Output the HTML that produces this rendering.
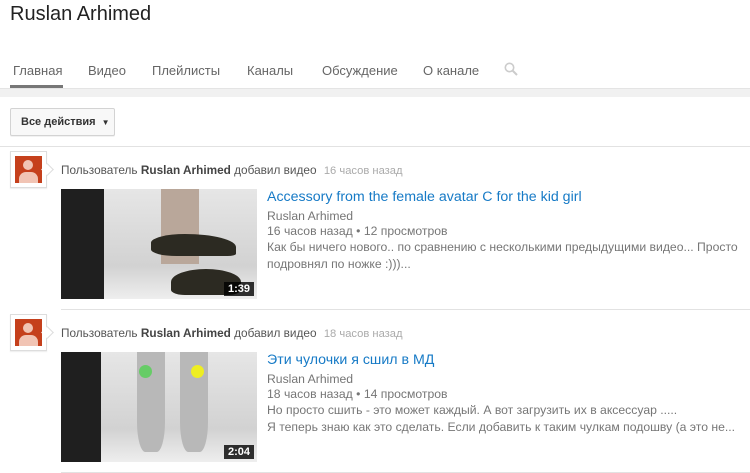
<!DOCTYPE html>
<html><head><meta charset="utf-8"><style>
*{margin:0;padding:0;box-sizing:border-box}
body{width:750px;height:473px;overflow:hidden;background:#fff;font-family:"Liberation Sans",Arial,sans-serif;position:relative;color:#222}
.a{position:absolute;white-space:nowrap}
.tab{font-size:13px;color:#666;top:63px}
.av{position:absolute;left:10px;width:37px;height:37px;border:1px solid #ddd;background:#fff;box-shadow:0 1px 1px rgba(0,0,0,.08)}
.av i{position:absolute;left:4px;top:4px;width:27px;height:27px;background:#c5401c;overflow:hidden}
.av i:before{content:"";position:absolute;left:8px;top:4px;width:10px;height:10px;border-radius:50%;background:#f1c4b4}
.av i:after{content:"";position:absolute;left:4px;top:16px;width:19px;height:14px;border-radius:7px 7px 0 0;background:#f1c4b4}
.av b{position:absolute;right:-6px;top:13px;width:9px;height:9px;background:#fff;border-right:1px solid #ddd;border-top:1px solid #ddd;transform:rotate(45deg)}
.feed{font-size:11.8px;color:#555;left:61px}
.feed b{color:#444;font-weight:600}
.feed span{color:#aaa;font-size:11.2px;margin-left:4px}
.th{position:absolute;left:61px;width:196px;height:110px;background:linear-gradient(#e6e6e6,#d2d2d2 70%,#eee)}
.th .p{position:absolute;left:0;top:0;width:43px;height:110px;background:#1f1f1f}
.th .d{position:absolute;right:3px;bottom:3px;background:rgba(0,0,0,.8);color:#fff;font-size:11px;font-weight:bold;padding:1px 4px}
.ttl{font-size:14.2px;color:#167ac6;left:267px}
.m{font-size:12.2px;color:#767676;left:267px}
.ds{font-size:12.2px;color:#767676;left:267px;line-height:17px}
.hr{position:absolute;height:1px;background:#e2e2e2}
</style></head><body>
<div class="a" style="left:10px;top:3px;font-size:20px;color:#222">Ruslan Arhimed</div>
<div class="a tab" style="left:13px">Главная</div>
<div class="a tab" style="left:88px">Видео</div>
<div class="a tab" style="left:152px">Плейлисты</div>
<div class="a tab" style="left:247px">Каналы</div>
<div class="a tab" style="left:322px">Обсуждение</div>
<div class="a tab" style="left:423px">О канале</div>
<svg class="a" style="left:504px;top:62px" width="14" height="14" viewBox="0 0 14 14"><circle cx="5.5" cy="5.5" r="4.2" fill="none" stroke="#ccc" stroke-width="1.6"/><path d="M8.5 8.5L13 13" stroke="#ccc" stroke-width="2"/></svg>
<div class="a" style="left:10px;top:85px;width:53px;height:3px;background:#777"></div>
<div class="a" style="left:0;top:88px;width:750px;height:9px;background:#f1f1f1;border-top:1px solid #e4e4e4"></div>
<div class="a" style="left:10px;top:108px;width:105px;height:28px;border:1px solid #d3d3d3;border-radius:2px;background:#f8f8f8;box-shadow:0 1px 0 rgba(0,0,0,.05);font-size:11px;font-weight:bold;color:#333;padding:7px 0 0 10px">Все действия <span style="font-size:8px;margin-left:3px">▼</span></div>
<div class="hr" style="left:0;top:146px;width:750px"></div>

<div class="av" style="top:151px"><i></i><b></b></div>
<div class="a feed" style="top:163px">Пользователь <b>Ruslan Arhimed</b> добавил видео <span>16 часов назад</span></div>
<div class="th" style="top:189px"><div class="p"></div>
<div style="position:absolute;left:100px;top:0;width:38px;height:75px;background:#b9a79a"></div>
<div style="position:absolute;left:90px;top:45px;width:85px;height:22px;border-radius:40% 60% 10% 30%;background:#2c2a22"></div>
<div style="position:absolute;left:110px;top:80px;width:70px;height:26px;border-radius:50% 50% 20% 20%;background:#2c2a22"></div>
<div class="d">1:39</div></div>
<div class="a ttl" style="top:189px">Accessory from the female avatar C for the kid girl</div>
<div class="a m" style="top:209px">Ruslan Arhimed</div>
<div class="a m" style="top:224px">16 часов назад • 12 просмотров</div>
<div class="a ds" style="top:239px">Как бы ничего нового.. по сравнению с несколькими предыдущими видео... Просто<br>подровнял по ножке :)))...</div>
<div class="hr" style="left:61px;top:309px;width:689px"></div>

<div class="av" style="top:314px"><i></i><b></b></div>
<div class="a feed" style="top:326px">Пользователь <b>Ruslan Arhimed</b> добавил видео <span>18 часов назад</span></div>
<div class="th" style="top:352px"><div class="p" style="width:40px"></div>
<div style="position:absolute;left:76px;top:0;width:28px;height:100px;background:#b8b8b8;border-radius:0 0 30% 30%"></div>
<div style="position:absolute;left:119px;top:0;width:28px;height:100px;background:#b8b8b8;border-radius:0 0 30% 30%"></div>
<div style="position:absolute;left:78px;top:13px;width:13px;height:13px;border-radius:50%;background:#6c6"></div>
<div style="position:absolute;left:130px;top:13px;width:13px;height:13px;border-radius:50%;background:#ee2"></div>
<div class="d">2:04</div></div>
<div class="a ttl" style="top:352px">Эти чулочки я сшил в МД</div>
<div class="a m" style="top:372px">Ruslan Arhimed</div>
<div class="a m" style="top:387px">18 часов назад • 14 просмотров</div>
<div class="a ds" style="top:402px">Но просто сшить - это может каждый. А вот загрузить их в аксессуар .....<br>Я теперь знаю как это сделать. Если добавить к таким чулкам подошву (а это не...</div>
<div class="hr" style="left:61px;top:472px;width:689px"></div>
</body></html>
